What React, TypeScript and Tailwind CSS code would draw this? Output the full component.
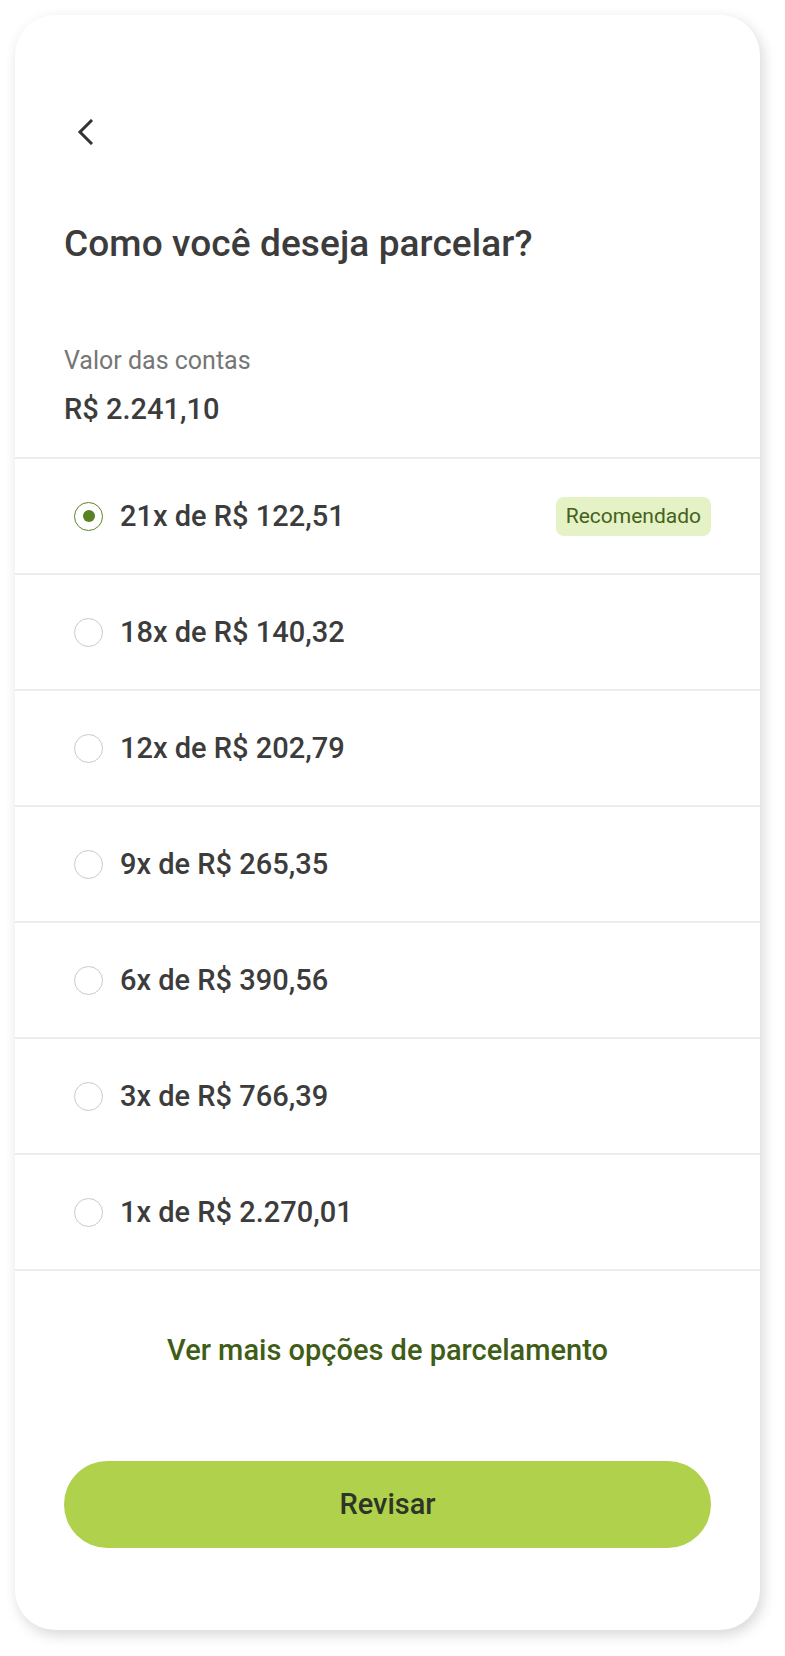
import React, { useState } from 'react';

type Option = {
  id: number;
  label: string;
  recommended?: boolean;
};

const options: Option[] = [
  { id: 21, label: '21x de R$ 122,51', recommended: true },
  { id: 18, label: '18x de R$ 140,32' },
  { id: 12, label: '12x de R$ 202,79' },
  { id: 9, label: '9x de R$ 265,35' },
  { id: 6, label: '6x de R$ 390,56' },
  { id: 3, label: '3x de R$ 766,39' },
  { id: 1, label: '1x de R$ 2.270,01' },
];

export default function App() {
  const [selected, setSelected] = useState(21);

  return (
    <div className="w-full min-h-[1656px] bg-white pt-[15px] pl-[15px] font-['Roboto',sans-serif]">
      <div className="w-[745px] h-[1615px] bg-white rounded-[40px] shadow-[3px_5px_14px_rgba(0,0,0,0.16)] overflow-hidden flex flex-col">
        {/* Header */}
        <div className="h-[442px] px-[49px] flex flex-col">
          <button className="mt-[104px] ml-[13px] w-[16px] h-[26px] text-[#333333]">
            <svg width="16" height="26" viewBox="0 0 16 26" fill="none">
              <polyline points="14,2 3,13 14,24" stroke="currentColor" strokeWidth="3" strokeLinecap="square" />
            </svg>
          </button>
          <h1 className="mt-[77px] text-[37px] leading-[44px] font-medium tracking-[0.1px] text-[#3c3c3c]">Como você deseja parcelar?</h1>
          <p className="mt-[80px] text-[25px] leading-[30px] text-[#767676]">Valor das contas</p>
          <p className="mt-[16px] text-[29px] leading-[34px] font-medium text-[#3c3c3c]">R$ 2.241,10</p>
        </div>

        {/* Options */}
        <ul className="flex flex-col border-b-2 border-[#ececec]">
          {options.map(o => (
            <li
              key={o.id}
              onClick={() => setSelected(o.id)}
              className="h-[116px] border-t-2 border-[#ececec] flex items-center pl-[59px] pr-[49px] cursor-pointer"
            >
              {selected === o.id ? (
                <span className="w-[29px] h-[29px] rounded-full border-[1.5px] border-[#5e8525] flex items-center justify-center">
                  <span className="w-[12px] h-[12px] rounded-full bg-[#5a8222]"></span>
                </span>
              ) : (
                <span className="w-[29px] h-[29px] rounded-full border border-[#c9c9c9]"></span>
              )}
              <span className="ml-[17px] text-[29px] leading-[34px] font-medium text-[#3c3c3c]">{o.label}</span>
              {o.recommended && (
                <span className="ml-auto h-[39px] px-[10px] rounded-[8px] bg-[#e4f2c6] text-[#44621b] text-[21px] leading-[39px]">
                  Recomendado
                </span>
              )}
            </li>
          ))}
        </ul>

        {/* Footer */}
        <div className="px-[49px] flex flex-col items-center">
          <button className="mt-[62px] text-[29px] leading-[34px] font-medium text-[#3f5d16]">
            Ver mais opções de parcelamento
          </button>
          <button className="mt-[94px] w-full h-[87px] rounded-full bg-[#afd14c] text-[29px] font-medium text-[#2e3527]">
            Revisar
          </button>
        </div>
      </div>
    </div>
  );
}
